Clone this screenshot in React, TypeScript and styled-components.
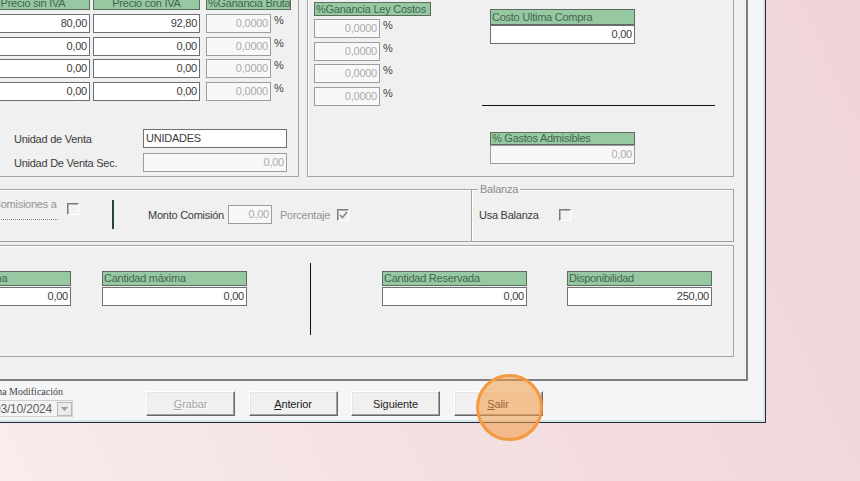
import React from 'react';
import styled, { createGlobalStyle } from 'styled-components';

const GlobalStyle = createGlobalStyle`
  html, body {
    margin: 0;
    padding: 0;
  }
  body {
    width: 860px;
    height: 481px;
    overflow: hidden;
    font-family: "Liberation Sans", Arial, sans-serif;
    font-size: 11px;
    letter-spacing: -0.25px;
    color: #3a3a3a;
  }
`;

const Screen = styled.div`
  position: relative;
  width: 860px;
  height: 481px;
  overflow: hidden;
  background: linear-gradient(65deg, #f8ecec 0%, #f4e0e2 40%, #efd3d8 100%);
`;

const Window = styled.div`
  width: 906px;
  height: 453px;
  margin: -30px 0 0 -140px;
  box-sizing: border-box;
  border: 1px solid #1f2a35;
`;

const Frame = styled.div`
  height: 100%;
  box-sizing: border-box;
  border: 2px solid #d8e5ef;
  background: #f4f5f7;
  padding-right: 15px;
  display: flex;
  flex-direction: column;
`;

const Panel = styled.div`
  height: 408px;
  flex-shrink: 0;
  box-sizing: border-box;
  background: #f0f0f0;
  border-right: 2px solid #7d7d7d;
  border-bottom: 2px solid #7d7d7d;
  padding: 17px 12px 0 17px;
  display: flex;
  flex-direction: column;
`;

const Row = styled.div<{ $h: number; $mt?: number; $gap?: number }>`
  display: flex;
  flex-shrink: 0;
  height: ${p => p.$h}px;
  margin-top: ${p => p.$mt ?? 0}px;
  gap: ${p => p.$gap ?? 0}px;
`;

const GroupBox = styled.div<{ $w: number; $dir?: 'row' | 'column'; $noRight?: boolean }>`
  position: relative;
  width: ${p => p.$w}px;
  height: 100%;
  box-sizing: border-box;
  border: 1px solid #a3a3a3;
  ${p => (p.$noRight ? 'border-right: none;' : '')}
  box-shadow: inset 1px 1px 0 #fff;
  display: flex;
  flex-direction: ${p => p.$dir ?? 'row'};
  align-items: flex-start;
`;

const Legend = styled.span`
  position: absolute;
  top: -7px;
  left: 6px;
  padding: 0 2px;
  line-height: 12px;
  background: #f0f0f0;
  color: #8d8d8d;
`;

const Header = styled.div<{ $center?: boolean; $h?: number }>`
  height: ${p => p.$h ?? 14}px;
  box-sizing: border-box;
  border: 1px solid #5c6d60;
  background: #96c9a2;
  color: #44654d;
  line-height: ${p => (p.$h ?? 14) - 2}px;
  padding: 0 1px;
  white-space: nowrap;
  overflow: hidden;
  text-align: ${p => (p.$center ? 'center' : 'left')};
`;

const Field = styled.div<{ $w?: number; $disabled?: boolean; $left?: boolean; $mt?: number }>`
  width: ${p => (p.$w ? `${p.$w}px` : '100%')};
  height: 19px;
  flex-shrink: 0;
  margin-top: ${p => p.$mt ?? 0}px;
  box-sizing: border-box;
  border: 1px solid ${p => (p.$disabled ? '#9d9d9d' : '#6f6f6f')};
  background: ${p => (p.$disabled ? '#f8f8f8' : '#fff')};
  color: ${p => (p.$disabled ? '#ababab' : '#3a3a3a')};
  text-align: ${p => (p.$left ? 'left' : 'right')};
  padding: 0 2px;
  line-height: 17px;
  white-space: nowrap;
`;

const PriceTable = styled.div`
  display: flex;
  margin: 5px 0 0 95px;
`;

const Column = styled.div<{ $w: number; $mr?: number; $mt?: number; $ml?: number }>`
  display: flex;
  flex-direction: column;
  width: ${p => p.$w}px;
  margin: ${p => p.$mt ?? 0}px ${p => p.$mr ?? 0}px 0 ${p => p.$ml ?? 0}px;
`;

const FieldStack = styled.div<{ $mt: number }>`
  display: flex;
  flex-direction: column;
  gap: 3.5px;
  margin-top: ${p => p.$mt}px;
`;

const PctRow = styled.div`
  display: flex;
  align-items: flex-start;
`;

const Pct = styled.span`
  margin: 1px 0 0 3px;
  line-height: 11px;
  color: #444;
`;

const UnitRows = styled.div`
  display: flex;
  flex-direction: column;
  gap: 5px;
  margin: 28.5px 0 0 133px;
`;

const UnitRow = styled.div`
  display: flex;
  align-items: center;
  height: 19px;
`;

const Label = styled.span<{ $w: number; $grey?: boolean; $ml?: number }>`
  width: ${p => p.$w}px;
  flex-shrink: 0;
  margin-left: ${p => p.$ml ?? 0}px;
  color: ${p => (p.$grey ? '#949494' : '#3c3c3c')};
  white-space: nowrap;
`;

const RightCol = styled.div`
  display: flex;
  flex-direction: column;
  width: 233px;
  margin-left: 51px;
`;

const Block = styled.div<{ $mt: number; $ml: number }>`
  display: flex;
  flex-direction: column;
  width: 145px;
  flex-shrink: 0;
  margin: ${p => p.$mt}px 0 0 ${p => p.$ml}px;
`;

const HLine = styled.div`
  height: 1px;
  margin-top: 61px;
  background: #111;
`;

const CommLabel = styled.div`
  width: 65px;
  flex-shrink: 0;
  margin: 8px 0 0 112px;
  line-height: 12px;
  padding-bottom: 9px;
  border-bottom: 1px dotted #8a8a8a;
  color: #949494;
  white-space: nowrap;
`;

const Check = styled.span<{ $mt?: number; $ml?: number }>`
  display: flex;
  align-items: center;
  justify-content: center;
  width: 12px;
  height: 12px;
  flex-shrink: 0;
  margin: ${p => p.$mt ?? 0}px 0 0 ${p => p.$ml ?? 0}px;
  box-sizing: border-box;
  border-top: 1px solid #7a7a7a;
  border-left: 1px solid #7a7a7a;
  border-right: 1px solid #fff;
  border-bottom: 1px solid #fff;
  box-shadow: inset 1px 1px 0 #b4b4b4;
  background: #f2f2f2;
`;

const GreenRule = styled.div`
  width: 2px;
  height: 29px;
  flex-shrink: 0;
  margin: 10px 0 0 33px;
  background: #284432;
`;

const InlineGroup = styled.div<{ $ml: number }>`
  display: flex;
  align-items: center;
  height: 19px;
  margin: 15px 0 0 ${p => p.$ml}px;
`;

const VRule = styled.div`
  width: 1px;
  height: 72px;
  flex-shrink: 0;
  margin: 17px 0 0 63px;
  background: #111;
`;

const ButtonBar = styled.div`
  height: 39px;
  flex-shrink: 0;
  display: flex;
  align-items: flex-start;
`;

const DateGroup = styled.div`
  display: flex;
  flex-direction: column;
  width: 83px;
  margin: 5px 0 0 127px;
`;

const DateLabel = styled.div`
  display: flex;
  justify-content: flex-end;
  height: 12px;
  padding-right: 10px;
  white-space: nowrap;
  font-family: "Liberation Serif", "Times New Roman", serif;
  font-size: 10px;
  letter-spacing: 0;
  line-height: 12px;
  color: #444;
`;

const Combo = styled.div`
  display: flex;
  align-items: center;
  justify-content: space-between;
  height: 17px;
  margin-top: 2px;
  box-sizing: border-box;
  border: 1px solid #d0d0d0;
  background: #f4f4f4;
  padding-left: 3px;
  font-size: 12px;
  letter-spacing: -0.2px;
  color: #5f5f5f;
`;

const DropBtn = styled.span`
  display: flex;
  align-items: center;
  justify-content: center;
  width: 15px;
  height: 14px;
  box-sizing: border-box;
  border: 1px solid #b8b8b8;
  background: #ebebeb;
`;

const Buttons = styled.div`
  display: flex;
  gap: 13.5px;
  margin: 10px 0 0 73px;
`;

const Button = styled.button<{ $disabled?: boolean }>`
  width: 89px;
  height: 25px;
  box-sizing: border-box;
  padding: 0;
  background: #f0f0f0;
  border: 1px solid;
  border-color: #fff #696969 #696969 #fff;
  box-shadow: inset -1px -1px 0 #a0a0a0, inset 1px 1px 0 #e6e6e6;
  font-family: "Liberation Sans", Arial, sans-serif;
  font-size: 11px;
  letter-spacing: -0.1px;
  color: ${p => (p.$disabled ? '#a3a3a3' : '#1c1c1c')};
  text-shadow: ${p => (p.$disabled ? '1px 1px 0 #fff' : 'none')};
`;

const Highlight = styled.div`
  position: absolute;
  left: 476px;
  top: 374px;
  width: 67px;
  height: 67px;
  box-sizing: border-box;
  border-radius: 50%;
  border: 3px solid #f39a3f;
  background: rgba(243, 154, 69, 0.55);
  pointer-events: none;
`;

const precioSin = ['80,00', '0,00', '0,00', '0,00'];
const precioCon = ['92,80', '0,00', '0,00', '0,00'];
const zeros = ['0,0000', '0,0000', '0,0000', '0,0000'];

const stock = [
  { title: 'Cantidad mínima', value: '0,00', ml: 45 },
  { title: 'Cantidad máxima', value: '0,00', ml: 31 },
];
const stockRight = [
  { title: 'Cantidad Reservada', value: '0,00', ml: 71 },
  { title: 'Disponibilidad', value: '250,00', ml: 40 },
];

const CheckMark = () => (
  <svg width="9" height="8" viewBox="0 0 9 8">
    <path d="M1 4 L3.5 6.5 L8 1" fill="none" stroke="#8a8a8a" strokeWidth="1.6" />
  </svg>
);

const StockBlock = ({ title, value, ml }: { title: string; value: string; ml: number }) => (
  <Block $mt={25} $ml={ml}>
    <Header $h={15}>{title}</Header>
    <Field $mt={1}>{value}</Field>
  </Block>
);

export default function App() {
  return (
    <>
      <GlobalStyle />
      <Screen>
        <Window>
          <Frame>
            <Panel>
              <Row $h={187} $gap={8}>
                <GroupBox $w={419} $dir="column">
                  <PriceTable>
                    <Column $w={114} $mr={3}>
                      <Header $center>Precio sin IVA</Header>
                      <FieldStack $mt={4}>
                        {precioSin.map((v, i) => (
                          <Field key={i}>{v}</Field>
                        ))}
                      </FieldStack>
                    </Column>
                    <Column $w={107} $mr={6}>
                      <Header $center>Precio con IVA</Header>
                      <FieldStack $mt={4}>
                        {precioCon.map((v, i) => (
                          <Field key={i}>{v}</Field>
                        ))}
                      </FieldStack>
                    </Column>
                    <Column $w={85}>
                      <Header>%Ganancia Bruta</Header>
                      <FieldStack $mt={4}>
                        {zeros.map((v, i) => (
                          <PctRow key={i}>
                            <Field $w={65} $disabled>{v}</Field>
                            <Pct>%</Pct>
                          </PctRow>
                        ))}
                      </FieldStack>
                    </Column>
                  </PriceTable>
                  <UnitRows>
                    <UnitRow>
                      <Label $w={129}>Unidad de Venta</Label>
                      <Field $w={144} $left>UNIDADES</Field>
                    </UnitRow>
                    <UnitRow>
                      <Label $w={129}>Unidad De Venta Sec.</Label>
                      <Field $w={144} $disabled>0,00</Field>
                    </UnitRow>
                  </UnitRows>
                </GroupBox>

                <GroupBox $w={427}>
                  <Column $w={117} $mt={11} $ml={6}>
                    <Header>%Ganancia Ley Costos</Header>
                    <FieldStack $mt={3}>
                      {zeros.map((v, i) => (
                        <PctRow key={i}>
                          <Field $w={66} $disabled>{v}</Field>
                          <Pct>%</Pct>
                        </PctRow>
                      ))}
                    </FieldStack>
                  </Column>
                  <RightCol>
                    <Block $mt={18} $ml={8}>
                      <Header $h={16}>Costo Ultima Compra</Header>
                      <Field>0,00</Field>
                    </Block>
                    <HLine />
                    <Block $mt={26} $ml={8}>
                      <Header $h={13}>% Gastos Admisibles</Header>
                      <Field $disabled>0,00</Field>
                    </Block>
                  </RightCol>
                </GroupBox>
              </Row>

              <Row $h={53} $mt={12}>
                <GroupBox $w={591} $noRight>
                  <CommLabel>Comisiones a</CommLabel>
                  <Check $mt={13} $ml={9} />
                  <GreenRule />
                  <InlineGroup $ml={34}>
                    <Label $w={80}>Monto Comisión</Label>
                    <Field $w={44} $disabled>0,00</Field>
                    <Label $w={57} $ml={8} $grey>Porcentaje</Label>
                    <Check>
                      <CheckMark />
                    </Check>
                  </InlineGroup>
                </GroupBox>
                <GroupBox $w={263}>
                  <Legend>Balanza</Legend>
                  <InlineGroup $ml={7}>
                    <Label $w={80}>Usa Balanza</Label>
                    <Check />
                  </InlineGroup>
                </GroupBox>
              </Row>

              <Row $h={112} $mt={3}>
                <GroupBox $w={854}>
                  {stock.map(s => (
                    <StockBlock key={s.title} {...s} />
                  ))}
                  <VRule />
                  {stockRight.map(s => (
                    <StockBlock key={s.title} {...s} />
                  ))}
                </GroupBox>
              </Row>
            </Panel>

            <ButtonBar>
              <DateGroup>
                <DateLabel>
                  <span>Fecha Ultima Modificación</span>
                </DateLabel>
                <Combo>
                  <span>03/10/2024</span>
                  <DropBtn>
                    <svg width="7" height="4" viewBox="0 0 7 4">
                      <path d="M0 0 L7 0 L3.5 4 Z" fill="#9a9a9a" />
                    </svg>
                  </DropBtn>
                </Combo>
              </DateGroup>
              <Buttons>
                <Button $disabled>
                  <u>G</u>rabar
                </Button>
                <Button>
                  <u>A</u>nterior
                </Button>
                <Button>
                  Si<u>g</u>uiente
                </Button>
                <Button>
                  <u>S</u>alir
                </Button>
              </Buttons>
            </ButtonBar>
          </Frame>
        </Window>
        <Highlight />
      </Screen>
    </>
  );
}
